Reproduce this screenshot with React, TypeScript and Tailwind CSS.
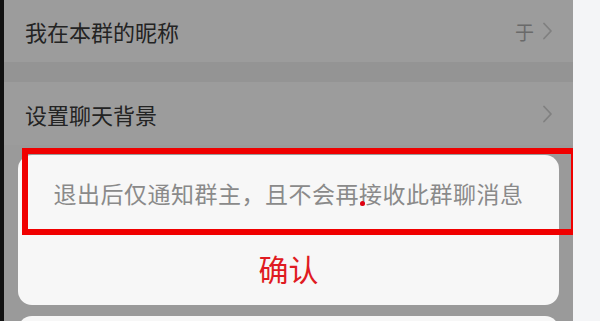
import React from "react";

const font = { fontFamily: '"Noto Sans CJK SC", "Noto Sans", sans-serif' };

function Chevron() {
  return (
    <svg width="11" height="20" viewBox="0 0 11 20" fill="none" className="shrink-0">
      <path d="M2 2.5l7 7.5-7 7.5" stroke="#808080" strokeWidth="1.8" strokeLinecap="round" strokeLinejoin="round" />
    </svg>
  );
}

function Row({ label, value, h }: { label: string; value?: string; h: string }) {
  return (
    <div className={`shrink-0 flex items-center justify-between pl-[21px] pr-[20px] bg-[#9c9c9c] ${h}`}>
      <span className="text-[22px] text-[#232323] leading-none">{label}</span>
      <div className="flex items-center gap-[8px]">
        {value && <span className="text-[19px] text-[#6a6a6a] leading-none">{value}</span>}
        <Chevron />
      </div>
    </div>
  );
}

export default function App() {
  return (
    <div className="flex w-[600px] h-[321px] overflow-hidden" style={font}>
      <div className="w-[4px] bg-[#111111]" />
      <div className="relative w-[569px] bg-[#9a9a9a] flex flex-col overflow-hidden">
        <Row label="我在本群的昵称" value="于" h="h-[62px]" />
        <div className="shrink-0 h-[20px] bg-[#949494]" />
        <Row label="设置聊天背景" h="h-[63px]" />

        {/* action sheet */}
        <div className="shrink-0 mt-[10px] mx-[14px] h-[150px] rounded-[14px] bg-[#f7f7f7] flex flex-col">
          <div className="h-[76px] flex items-center justify-center">
            <span className="text-[23px] text-[#8a8a8a] leading-none tracking-[0.5px]">
              退出后仅通知群主，且不会再接收此群聊消息
            </span>
          </div>
          <div className="flex-1 flex items-center justify-center">
            <span className="text-[30px] text-[#e01b22] leading-none">确认</span>
          </div>
        </div>
        <div className="shrink-0 mt-[11px] mx-[14px] h-[40px] rounded-[14px] bg-[#f7f7f7]" />

        {/* annotation */}
        <div className="absolute left-[18px] top-[148px] w-[555px] h-[87px] border-[6px] border-[#f00000]" />
        <div className="absolute left-[356px] top-[201px] w-[5px] h-[5px] rounded-full bg-[#e00010]" />
      </div>
      <div className="flex-1 bg-[#f4f5f7]" />
    </div>
  );
}
